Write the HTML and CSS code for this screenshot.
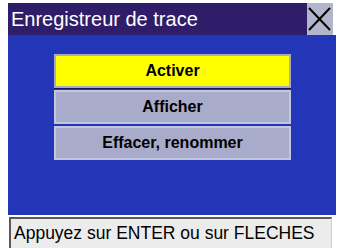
FILE: index.html
```html
<!DOCTYPE html>
<html>
<head>
<meta charset="utf-8">
<link rel="stylesheet" href="styles.css">
</head>
<body>
<div class="screen">
  <div class="titlebar">
    <div class="title">Enregistreur de trace</div>
    <div class="close">
      <svg width="26" height="32" viewBox="0 0 26 32"><path d="M2 5 L23 27 M23 5 L2 27" stroke="#000" stroke-width="2" fill="none"/></svg>
    </div>
  </div>
  <div class="main">
    <div class="menu">
      <div class="btn active">Activer</div>
      <div class="btn">Afficher</div>
      <div class="btn">Effacer, renommer</div>
    </div>
  </div>
  <div class="status">Appuyez sur ENTER ou sur FLECHES</div>
</div>
</body>
</html>
```
FILE: styles.css
```css
html, body {
  margin: 0;
  padding: 0;
  background: #ffffff;
  width: 339px;
  height: 248px;
  overflow: hidden;
  font-family: "Liberation Sans", Arial, sans-serif;
}
.screen {
  padding: 3px 0 0 8px;
}
.titlebar {
  display: flex;
  height: 32px;
  width: 325px;
  background: #2f1d69;
}
.title {
  flex: 1;
  color: #ffffff;
  font-size: 20px;
  line-height: 32px;
  padding-left: 3px;
}
.close {
  width: 26px;
  height: 32px;
  background: #b2b5cc;
}
.close svg {
  display: block;
}
.main {
  width: 328px;
  height: 180px;
  background: #2336b7;
  padding-top: 19px;
  box-sizing: border-box;
}
.menu {
  margin-left: 46px;
  width: 237px;
  display: flex;
  flex-direction: column;
  gap: 2px;
}
.btn {
  height: 34px;
  box-sizing: border-box;
  border: 2px solid #c3c7de;
  background: #a8abc9;
  text-align: center;
  font-weight: bold;
  font-size: 16px;
  line-height: 30px;
  color: #000;
}
.btn.active {
  background: #ffff00;
  border-color: #a9abc4;
  box-shadow: 0 1px 0 #101a5a;
}
.status {
  margin-top: 2px;
  margin-left: 1px;
  width: 323px;
  height: 32px;
  box-sizing: border-box;
  background: #ececec;
  border-top: 2px solid #5a5a5a;
  border-left: 2px solid #5a5a5a;
  border-right: 1px solid #d0d0d0;
  font-size: 17.5px;
  line-height: 28px;
  padding-left: 3px;
  color: #000;
  white-space: nowrap;
}
```
